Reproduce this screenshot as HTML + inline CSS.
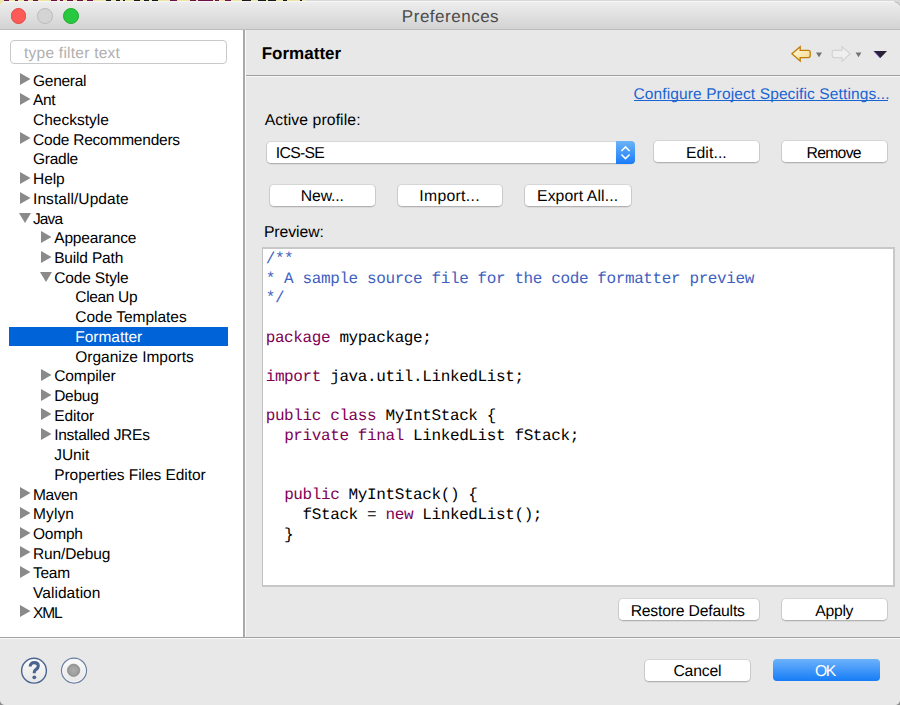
<!DOCTYPE html>
<html><head><meta charset="utf-8"><style>
html,body{margin:0;padding:0;width:900px;height:705px;overflow:hidden;background:#d8d8d8;}
body{position:relative;font-family:"Liberation Sans",sans-serif;text-rendering:geometricPrecision;}
.abs{position:absolute;}
#strip{position:absolute;left:0;top:0;width:306px;height:6px;background:#ebe6a6;}
#win{position:absolute;left:0;top:1.3px;width:900px;height:704px;background:#e8e8e8;border-radius:6px 6px 0 0;overflow:hidden;}
#title{position:absolute;left:0;top:0;width:900px;height:28px;background:linear-gradient(#eeeeee,#d3d3d3);border-bottom:1px solid #bdbdbd;box-shadow:inset 0 1px 0 #f6f6f6;}
.light{position:absolute;width:15.8px;height:15.8px;border-radius:50%;box-sizing:border-box;}
.t{position:absolute;line-height:20px;white-space:nowrap;}
#left{position:absolute;left:0;top:30px;width:243px;height:607px;background:#fff;}
#vsep{position:absolute;left:243px;top:30px;width:2px;height:607px;background:#a9a9a9;}
#vsep2{position:absolute;left:245px;top:30px;width:1px;height:607px;background:#fbfbfb;}
#filter{position:absolute;left:10px;top:40px;width:215px;height:22px;border:1px solid #c9c9c9;border-radius:4px;background:#fff;}
#filter span{position:absolute;left:13px;top:0;line-height:22px;font-size:15.5px;color:#b3b3b3;}
.row{position:absolute;font-size:15.5px;line-height:20px;color:#000;white-space:nowrap;}
.tri{position:absolute;}
#selbar{position:absolute;left:9px;top:327px;width:219px;height:19px;background:#0064d8;}
.sel{color:#fff;}
#hline{position:absolute;left:246px;top:75px;width:654px;height:1px;background:#a0a0a0;}
#hline2{position:absolute;left:246px;top:76px;width:654px;height:1px;background:#f6f6f6;}
#linkul{position:absolute;left:634px;top:100px;width:254px;height:1px;background:#1a64d2;}
.btn{position:absolute;height:23px;box-sizing:border-box;background:#fff;border-radius:5px;border:1px solid #cacaca;border-top-color:#d6d6d6;border-bottom-color:#b2b2b2;box-shadow:0 1px 0 rgba(0,0,0,0.06);}
#combo{position:absolute;left:266px;top:141px;width:369px;height:23px;box-sizing:border-box;background:#fff;border-radius:5px;border:1px solid #cacaca;border-top-color:#d6d6d6;border-bottom-color:#b2b2b2;box-shadow:0 1px 0 rgba(0,0,0,0.06);}
#arr{position:absolute;left:616px;top:141px;width:19px;height:23px;border-radius:0 4px 4px 0;background:linear-gradient(#6db3f9,#1a7cf6);}
#preview{position:absolute;left:262px;top:247px;width:633px;height:340px;box-sizing:border-box;background:#fff;border:2px solid #c8c8c8;border-left:1px solid #c2c2c2;}
.cl{position:absolute;left:265.7px;font-family:"Liberation Mono",monospace;font-size:16px;letter-spacing:-0.390px;line-height:20px;white-space:pre;color:#000;}
.k{color:#7f0055;}
.c{color:#3f5fbf;}
#bline{position:absolute;left:0;top:637px;width:900px;height:1px;background:#a2a2a2;}
#bline2{position:absolute;left:0;top:638px;width:900px;height:1px;background:#f8f8f8;}
#okbtn{position:absolute;left:773px;top:659px;width:107px;height:22px;border-radius:4px;background:linear-gradient(#6cb2fa,#167cf7);}
</style></head><body>
<div id="strip"><div style="position:absolute;left:3.7px;top:0;width:5.3px;height:1.3px;background:#6e1048"></div><div style="position:absolute;left:15px;top:0;width:3px;height:1.3px;background:#6e1048"></div><div style="position:absolute;left:24px;top:0;width:4px;height:1.3px;background:#6e1048"></div><div style="position:absolute;left:33px;top:0;width:5px;height:1.3px;background:#6e1048"></div><div style="position:absolute;left:51px;top:0;width:6px;height:1.3px;background:#6e1048"></div><div style="position:absolute;left:60px;top:0;width:3px;height:1.3px;background:#6e1048"></div><div style="position:absolute;left:67px;top:0;width:6px;height:1.3px;background:#6e1048"></div><div style="position:absolute;left:77px;top:0;width:6px;height:1.3px;background:#6e1048"></div><div style="position:absolute;left:87px;top:0;width:6px;height:1.3px;background:#6e1048"></div><div style="position:absolute;left:106px;top:0;width:5px;height:1.3px;background:#1a1a1a"></div><div style="position:absolute;left:116px;top:0;width:4px;height:1.3px;background:#1a1a1a"></div><div style="position:absolute;left:123px;top:0;width:2px;height:1.3px;background:#1a1a1a"></div><div style="position:absolute;left:134px;top:0;width:6px;height:1.3px;background:#1a1a1a"></div><div style="position:absolute;left:144px;top:0;width:5px;height:1.3px;background:#1a1a1a"></div><div style="position:absolute;left:152px;top:0;width:6px;height:1.3px;background:#1a1a1a"></div><div style="position:absolute;left:170px;top:0;width:7px;height:1.3px;background:#6e1048"></div><div style="position:absolute;left:190px;top:0;width:6px;height:1.3px;background:#6e1048"></div><div style="position:absolute;left:198px;top:0;width:15px;height:1.3px;background:#6e1048"></div><div style="position:absolute;left:215px;top:0;width:4px;height:1.3px;background:#6e1048"></div><div style="position:absolute;left:225px;top:0;width:6px;height:1.3px;background:#6e1048"></div><div style="position:absolute;left:242px;top:0;width:9px;height:1.3px;background:#1a1a1a"></div><div style="position:absolute;left:258px;top:0;width:8px;height:1.3px;background:#1a1a1a"></div><div style="position:absolute;left:268px;top:0;width:8px;height:1.3px;background:#1a1a1a"></div><div style="position:absolute;left:283px;top:0;width:4px;height:1.3px;background:#1a1a1a"></div><div style="position:absolute;left:300px;top:0;width:2px;height:1.3px;background:#1a1a1a"></div></div>
<div id="win">
<div id="title">
 <div class="light" style="left:10.6px;top:6.5px;background:#fd5b57;border:0.5px solid #e0443e;"></div>
 <div class="light" style="left:36.8px;top:6.5px;background:#d4d4d4;border:0.5px solid #bcbcbc;"></div>
 <div class="light" style="left:63px;top:6.5px;background:#28c840;border:0.5px solid #1dad2b;"></div>
</div>
</div>
<div class="t" style="left:401.86px;top:7px;font-size:17px;color:#4b4b4b;letter-spacing:0.509px">Preferences</div>
<div id="left"></div>
<div id="filter"></div>
<div class="t" style="left:24.03px;top:44px;font-size:15.5px;color:#b0b0b0;letter-spacing:0.248px">type filter text</div>
<div id="selbar"></div>
<div class="row" style="left:33.05px;top:72px;letter-spacing:-0.290px">General</div>
<svg class="tri" style="left:20.0px;top:73.30px" width="11" height="12" viewBox="0 0 11 12"><path d="M0 0L10.5 6L0 12Z" fill="#8a8a8a"/></svg>
<div class="row" style="left:33.05px;top:91px;letter-spacing:-0.386px">Ant</div>
<svg class="tri" style="left:20.0px;top:93.01px" width="11" height="12" viewBox="0 0 11 12"><path d="M0 0L10.5 6L0 12Z" fill="#8a8a8a"/></svg>
<div class="row" style="left:33.05px;top:111px;letter-spacing:0.007px">Checkstyle</div>
<div class="row" style="left:33.05px;top:131px;letter-spacing:-0.232px">Code Recommenders</div>
<svg class="tri" style="left:20.0px;top:132.43px" width="11" height="12" viewBox="0 0 11 12"><path d="M0 0L10.5 6L0 12Z" fill="#8a8a8a"/></svg>
<div class="row" style="left:33.05px;top:150px;letter-spacing:-0.274px">Gradle</div>
<div class="row" style="left:33.05px;top:170px;letter-spacing:-0.115px">Help</div>
<svg class="tri" style="left:20.0px;top:171.85px" width="11" height="12" viewBox="0 0 11 12"><path d="M0 0L10.5 6L0 12Z" fill="#8a8a8a"/></svg>
<div class="row" style="left:33.05px;top:190px;letter-spacing:0.066px">Install/Update</div>
<svg class="tri" style="left:20.0px;top:191.56px" width="11" height="12" viewBox="0 0 11 12"><path d="M0 0L10.5 6L0 12Z" fill="#8a8a8a"/></svg>
<div class="row" style="left:33.05px;top:210px;letter-spacing:-0.926px">Java</div>
<svg class="tri" style="left:19.0px;top:212.97px" width="12" height="11" viewBox="0 0 12 11"><path d="M0 0L12 0L6 9.9Z" fill="#8a8a8a"/></svg>
<div class="row" style="left:54.20px;top:229px;letter-spacing:-0.147px">Appearance</div>
<svg class="tri" style="left:41.1px;top:230.98px" width="11" height="12" viewBox="0 0 11 12"><path d="M0 0L10.5 6L0 12Z" fill="#8a8a8a"/></svg>
<div class="row" style="left:54.20px;top:249px;letter-spacing:-0.170px">Build Path</div>
<svg class="tri" style="left:41.1px;top:250.69px" width="11" height="12" viewBox="0 0 11 12"><path d="M0 0L10.5 6L0 12Z" fill="#8a8a8a"/></svg>
<div class="row" style="left:54.20px;top:269px;letter-spacing:-0.143px">Code Style</div>
<svg class="tri" style="left:40.1px;top:272.10px" width="12" height="11" viewBox="0 0 12 11"><path d="M0 0L12 0L6 9.9Z" fill="#8a8a8a"/></svg>
<div class="row" style="left:75.30px;top:288px;letter-spacing:-0.334px">Clean Up</div>
<div class="row" style="left:75.30px;top:308px;letter-spacing:-0.027px">Code Templates</div>
<div class="row sel" style="left:75.30px;top:328px;letter-spacing:-0.028px">Formatter</div>
<div class="row" style="left:75.30px;top:348px;letter-spacing:-0.032px">Organize Imports</div>
<div class="row" style="left:54.20px;top:367px;letter-spacing:-0.090px">Compiler</div>
<svg class="tri" style="left:41.1px;top:368.95px" width="11" height="12" viewBox="0 0 11 12"><path d="M0 0L10.5 6L0 12Z" fill="#8a8a8a"/></svg>
<div class="row" style="left:54.20px;top:387px;letter-spacing:-0.257px">Debug</div>
<svg class="tri" style="left:41.1px;top:388.66px" width="11" height="12" viewBox="0 0 11 12"><path d="M0 0L10.5 6L0 12Z" fill="#8a8a8a"/></svg>
<div class="row" style="left:54.20px;top:407px;letter-spacing:-0.098px">Editor</div>
<svg class="tri" style="left:41.1px;top:408.37px" width="11" height="12" viewBox="0 0 11 12"><path d="M0 0L10.5 6L0 12Z" fill="#8a8a8a"/></svg>
<div class="row" style="left:54.20px;top:426px;letter-spacing:-0.260px">Installed JREs</div>
<svg class="tri" style="left:41.1px;top:428.08px" width="11" height="12" viewBox="0 0 11 12"><path d="M0 0L10.5 6L0 12Z" fill="#8a8a8a"/></svg>
<div class="row" style="left:54.20px;top:446px;letter-spacing:-0.055px">JUnit</div>
<div class="row" style="left:54.20px;top:466px;letter-spacing:-0.040px">Properties Files Editor</div>
<div class="row" style="left:33.05px;top:486px;letter-spacing:-0.444px">Maven</div>
<svg class="tri" style="left:20.0px;top:487.21px" width="11" height="12" viewBox="0 0 11 12"><path d="M0 0L10.5 6L0 12Z" fill="#8a8a8a"/></svg>
<div class="row" style="left:33.05px;top:505px;letter-spacing:0.100px">Mylyn</div>
<svg class="tri" style="left:20.0px;top:506.92px" width="11" height="12" viewBox="0 0 11 12"><path d="M0 0L10.5 6L0 12Z" fill="#8a8a8a"/></svg>
<div class="row" style="left:33.05px;top:525px;letter-spacing:-0.241px">Oomph</div>
<svg class="tri" style="left:20.0px;top:526.63px" width="11" height="12" viewBox="0 0 11 12"><path d="M0 0L10.5 6L0 12Z" fill="#8a8a8a"/></svg>
<div class="row" style="left:33.05px;top:545px;letter-spacing:-0.149px">Run/Debug</div>
<svg class="tri" style="left:20.0px;top:546.34px" width="11" height="12" viewBox="0 0 11 12"><path d="M0 0L10.5 6L0 12Z" fill="#8a8a8a"/></svg>
<div class="row" style="left:33.05px;top:564px;letter-spacing:-0.288px">Team</div>
<svg class="tri" style="left:20.0px;top:566.05px" width="11" height="12" viewBox="0 0 11 12"><path d="M0 0L10.5 6L0 12Z" fill="#8a8a8a"/></svg>
<div class="row" style="left:33.05px;top:584px;letter-spacing:0.048px">Validation</div>
<div class="row" style="left:33.05px;top:604px;letter-spacing:-1.150px">XML</div>
<svg class="tri" style="left:20.0px;top:605.47px" width="11" height="12" viewBox="0 0 11 12"><path d="M0 0L10.5 6L0 12Z" fill="#8a8a8a"/></svg>
<div id="vsep"></div><div id="vsep2"></div>
<div class="t" style="left:261.67px;top:44px;font-size:17px;font-weight:bold;color:#000;letter-spacing:0.023px">Formatter</div>
<svg class="abs" style="left:790px;top:45px" width="100" height="18" viewBox="0 0 100 18">
 <defs><linearGradient id="ag" x1="0" y1="0" x2="1" y2="1"><stop offset="0" stop-color="#fffbe2"/><stop offset="1" stop-color="#f5d889"/></linearGradient></defs>
 <path d="M1.9 8.8L10.2 1.7V5.4H18.3Q20.2 5.4 20.2 7.4V10.6Q20.2 12.6 18.3 12.6H10.2V16.1Z" fill="url(#ag)" stroke="#c17d08" stroke-width="1.3" stroke-linejoin="miter"/>
 <path d="M26 7.6H32L29 12.3Z" fill="#737373"/>
 <path d="M60.3 8.8L52 1.7V5.4H44Q42.2 5.4 42.2 7.4V10.6Q42.2 12.6 44 12.6H52V16.1Z" fill="#efefef" stroke="#d3d3d3" stroke-width="1.2"/>
 <path d="M65.6 7.6H71.4L68.5 12.3Z" fill="#737373"/>
 <path d="M83.8 6H97L90.4 13Z" fill="#2b2136"/>
 <path d="M83.8 6L90.4 13" stroke="#5a2aa8" stroke-width="0.9" fill="none"/>
</svg>
<svg class="abs" style="left:890px;top:0" width="10" height="10" viewBox="0 0 10 10"><path d="M4.5 1.6Q8.5 1.8 9.8 5.5" fill="none" stroke="#a9a9a9" stroke-width="0.9"/></svg>
<div id="hline"></div><div id="hline2"></div>
<div class="t" style="left:633.43px;top:85px;font-size:15.5px;color:#1a64d2;letter-spacing:0.122px">Configure Project Specific Settings...</div><div id="linkul"></div>
<div class="t" style="left:264.74px;top:111px;font-size:15.75px;color:#000;letter-spacing:0.089px">Active profile:</div>
<div id="combo"></div>
<div id="arr"><svg width="19" height="23" viewBox="0 0 19 23" style="position:absolute;left:0;top:0"><path d="M5.4 10.1L9.5 5.9L13.6 10.1M5.4 13.4L9.5 17.6L13.6 13.4" fill="none" stroke="#fff" stroke-width="1.5"/></svg></div>
<div class="t" style="left:275.80px;top:144px;font-size:15.75px;color:#000;letter-spacing:-0.701px">ICS-SE</div>
<div class="btn" style="left:653px;top:140px;width:107px;"></div>
<div class="btn" style="left:781px;top:140px;width:107px;"></div>
<div class="btn" style="left:269px;top:184px;width:107px;"></div>
<div class="btn" style="left:397px;top:184px;width:106px;"></div>
<div class="btn" style="left:524px;top:184px;width:108px;"></div>
<div class="t" style="left:685.93px;top:144px;font-size:15.75px;color:#000;letter-spacing:0.088px">Edit...</div><div class="t" style="left:806.53px;top:144px;font-size:15.75px;color:#000;letter-spacing:-0.723px">Remove</div><div class="t" style="left:300.83px;top:187px;font-size:15.75px;color:#000;letter-spacing:-0.129px">New...</div><div class="t" style="left:419.30px;top:187px;font-size:15.75px;color:#000;letter-spacing:0.311px">Import...</div><div class="t" style="left:537.03px;top:187px;font-size:15.75px;color:#000;letter-spacing:0.114px">Export All...</div>
<div class="t" style="left:263.93px;top:223px;font-size:15.75px;color:#000;letter-spacing:-0.053px">Preview:</div>
<div id="preview"></div>
<div class="cl" style="top:249px"><span class="c">/**</span></div>
<div class="cl" style="top:269px"><span class="c">* A sample source file for the code formatter preview</span></div>
<div class="cl" style="top:288px"><span class="c">*/</span></div>
<div class="cl" style="top:328px"><span class="k">package</span> mypackage;</div>
<div class="cl" style="top:367px"><span class="k">import</span> java.util.LinkedList;</div>
<div class="cl" style="top:406px"><span class="k">public</span> <span class="k">class</span> MyIntStack {</div>
<div class="cl" style="top:426px">  <span class="k">private</span> <span class="k">final</span> LinkedList fStack;</div>
<div class="cl" style="top:485px">  <span class="k">public</span> MyIntStack() {</div>
<div class="cl" style="top:505px">    fStack = <span class="k">new</span> LinkedList();</div>
<div class="cl" style="top:525px">  }</div>
<div class="btn" style="left:618px;top:598px;width:142px;"></div>
<div class="btn" style="left:781px;top:598px;width:107px;"></div>
<div class="t" style="left:630.63px;top:602px;font-size:15.75px;color:#000;letter-spacing:-0.200px">Restore Defaults</div><div class="t" style="left:815.34px;top:602px;font-size:15.75px;color:#000;letter-spacing:-0.314px">Apply</div>
<div id="bline"></div><div id="bline2"></div>
<svg class="abs" style="left:20px;top:657px" width="70" height="28" viewBox="0 0 70 28">
 <defs><linearGradient id="g1" x1="0" y1="0" x2="0" y2="1"><stop offset="0" stop-color="#fbfbfb"/><stop offset="1" stop-color="#e6e6e6"/></linearGradient>
 <radialGradient id="g2" cx="0.5" cy="0.5" r="0.5"><stop offset="0" stop-color="#acacac"/><stop offset="0.7" stop-color="#a0a0a0"/><stop offset="1" stop-color="#8e8e8e"/></radialGradient></defs>
 <circle cx="14" cy="13.7" r="12.4" fill="url(#g1)" stroke="#4b6591" stroke-width="1.4"/>
 <path d="M10.2 9.4C10.2 7 11.9 5.6 14.2 5.6C16.6 5.6 18.3 7 18.3 9.1C18.3 10.9 17.1 11.8 15.9 12.6C14.9 13.3 14.3 13.9 14.3 15.2V16.3" fill="none" stroke="#4b6591" stroke-width="3.1" stroke-linecap="butt"/>
 <circle cx="14.3" cy="20.3" r="1.9" fill="#4b6591"/>
 <circle cx="54" cy="13.6" r="12.5" fill="url(#g1)" stroke="#6a7ea2" stroke-width="1.2"/>
 <circle cx="54" cy="13.6" r="11.2" fill="none" stroke="#f6f6f6" stroke-width="1"/>
 <circle cx="53.6" cy="13.3" r="6.2" fill="url(#g2)" stroke="#8c8c8c" stroke-width="0.7"/>
</svg>
<div style="position:absolute;left:0;top:700px;width:5px;height:5px;background:radial-gradient(circle at 5px 0px, transparent 4.5px, #8a8a8a 5.5px);"></div>
<div style="position:absolute;left:895px;top:700px;width:5px;height:5px;background:radial-gradient(circle at 0px 0px, transparent 4.5px, #8a8a8a 5.5px);"></div>
<div class="btn" style="left:644px;top:659px;width:107px;"></div>
<div id="okbtn"></div>
<div class="t" style="left:673.41px;top:662px;font-size:15.75px;color:#000;letter-spacing:-0.191px">Cancel</div><div class="t" style="left:815.04px;top:662px;font-size:15.75px;color:#fff;letter-spacing:-1.529px">OK</div>
</body></html>
